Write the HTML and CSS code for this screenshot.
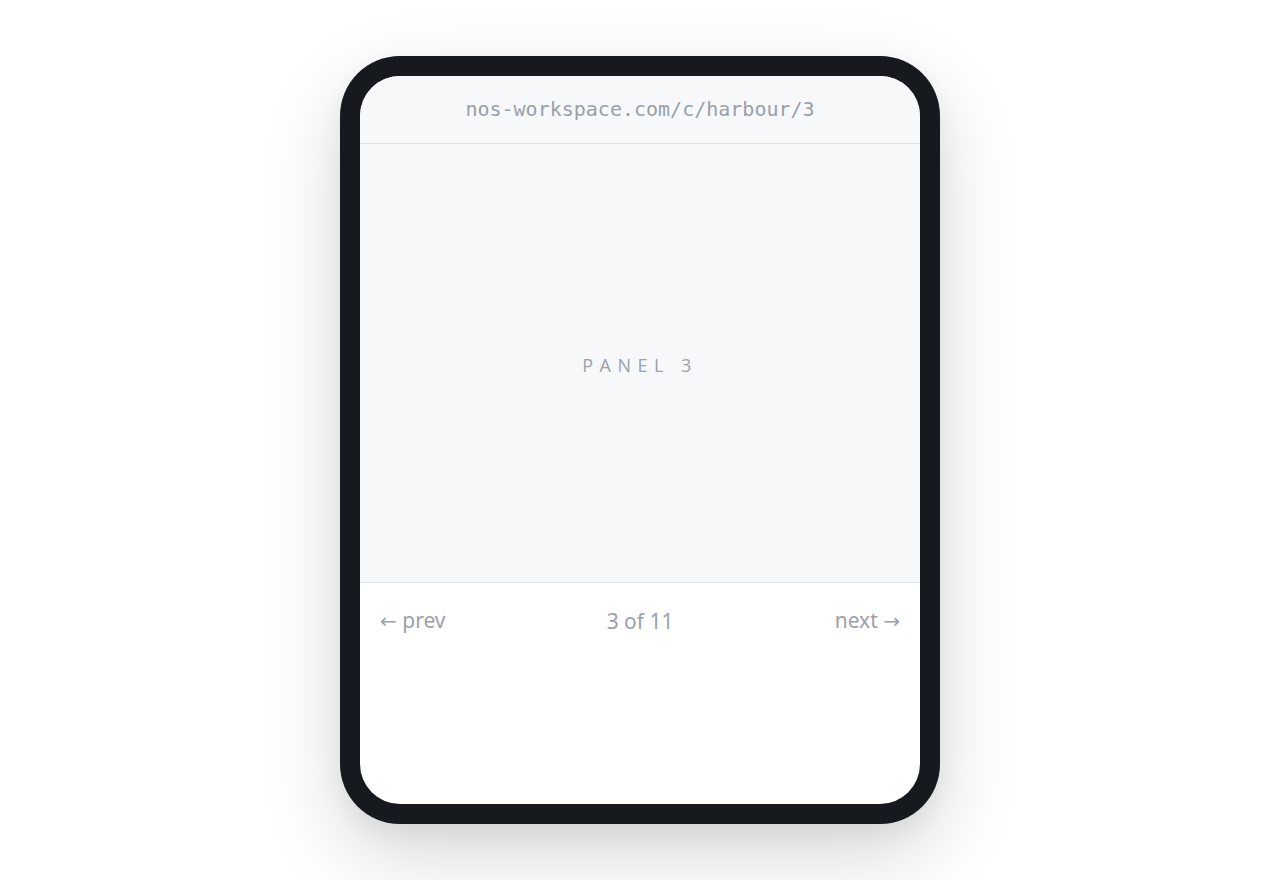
FILE: index.html
```html
<!DOCTYPE html>
<html>
<head>
<meta charset="utf-8">
<link rel="stylesheet" href="styles.css">
</head>
<body>
<div class="stage">
  <div class="device">
    <div class="screen">
      <div class="urlbar">nos-workspace.com/c/harbour/3</div>
      <div class="panel"><span class="panel-label">PANEL 3</span></div>
      <div class="pager">
        <span class="pager-link"><span class="arrow">←</span> prev</span>
        <span class="pager-count">3 of 11</span>
        <span class="pager-link">next <span class="arrow">→</span></span>
      </div>
    </div>
  </div>
</div>
</body>
</html>
```
FILE: styles.css
```css
html, body {
  margin: 0;
  padding: 0;
  background: #ffffff;
}
.stage {
  width: 1280px;
  height: 880px;
  display: flex;
  justify-content: center;
  padding-top: 56px;
  box-sizing: border-box;
}
.device {
  width: 600px;
  height: 768px;
  box-sizing: border-box;
  padding: 20px;
  background: #16191d;
  border-radius: 60px;
  box-shadow: 0 30px 80px rgba(0, 0, 0, 0.16), 0 10px 24px rgba(0, 0, 0, 0.05);
}
.screen {
  width: 560px;
  height: 728px;
  border-radius: 40px;
  overflow: hidden;
  background: #ffffff;
  display: flex;
  flex-direction: column;
}
.urlbar {
  height: 66px;
  flex: none;
  background: #f6f8fa;
  border-bottom: 1px solid #e1e4e8;
  display: flex;
  align-items: center;
  justify-content: center;
  font-family: "DejaVu Sans Mono", monospace;
  font-size: 20px;
  color: #99a0a9;
  padding-bottom: 1px;
}
.panel {
  height: 438px;
  flex: none;
  background: #f6f8fa;
  border-bottom: 1px solid #e1e4e8;
  display: flex;
  align-items: center;
  justify-content: center;
}
.panel-label {
  font-family: "Open Sans", sans-serif;
  font-size: 18px;
  letter-spacing: 6.5px;
  color: #9ca1aa;
  padding-top: 4px;
}
.pager {
  display: flex;
  justify-content: space-between;
  align-items: center;
  padding: 23px 20px 0 20px;
  font-family: "Noto Sans", sans-serif;
  font-size: 21px;
  color: #9ca1aa;
  line-height: 28px;
}
.arrow {
  font-family: "DejaVu Sans", sans-serif;
  font-size: 20px;
}
```
